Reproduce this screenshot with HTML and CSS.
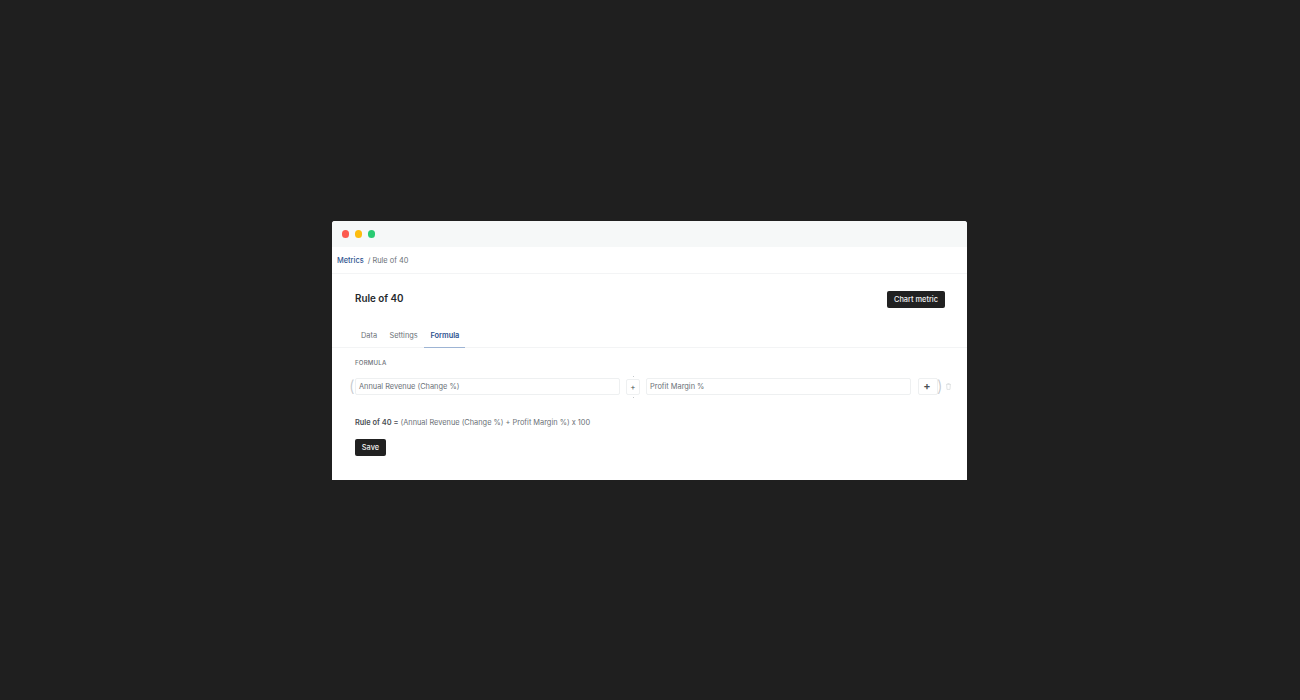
FILE: index.html
```html
<!DOCTYPE html>
<html lang="en">

<head>
    <meta charset="UTF-8">
    <title>Rule of 40</title>
    <link rel="stylesheet" href="styles.css">
</head>

<body>
    <div class="window">
        <div class="titlebar">
            <span class="dot dot-red"></span>
            <span class="dot dot-yellow"></span>
            <span class="dot dot-green"></span>
        </div>
        <div class="breadcrumb"><a>Metrics</a><span>/ Rule of 40</span></div>
        <div class="page-header">
            <h1>Rule of 40</h1>
            <button class="btn btn-chart">Chart metric</button>
        </div>
        <div class="tabs">
            <div class="tab">Data</div>
            <div class="tab">Settings</div>
            <div class="tab active">Formula</div>
        </div>
        <div class="content">
            <div class="section-label">FORMULA</div>
            <div class="formula-row">
                <span class="paren paren-left">(</span>
                <div class="field field-first">Annual Revenue (Change %)</div>
                <div class="operator">
                    <span class="op-tick"></span>
                    <div class="op-box">+</div>
                    <span class="op-tick"></span>
                </div>
                <div class="field field-second">Profit Margin %</div>
                <div class="add-box">+</div>
                <span class="paren paren-right">)</span>
                <svg class="trash" width="5" height="7" viewBox="0 0 6 8">
                    <path d="M0 1.5h6M2 1.5V.5h2v1M.8 1.5l.4 6h3.6l.4-6" fill="none" stroke="#dcdee0" stroke-width="1" />
                </svg>
            </div>
            <p class="result"><b>Rule of 40 =</b> (Annual Revenue (Change %) + Profit Margin %) x 100</p>
            <button class="btn btn-save">Save</button>
        </div>
    </div>
</body>

</html>
```

FILE: styles.css
```css
* {
    box-sizing: border-box;
}

body {
    margin: 0;
    height: 700px;
    background-color: #1f1f1f;
    display: flex;
    justify-content: flex-start;
    align-items: flex-start;
    padding: 221px 0 0 332px;
    font-family: Inter, "Liberation Sans", sans-serif;
    color: #6b7177;
}

.window {
    width: 635px;
    height: 259px;
    background-color: #fff;
    border-radius: 3px 3px 0 0;
    overflow: hidden;
}

.titlebar {
    height: 26px;
    background-color: #f6f8f8;
    display: flex;
    align-items: center;
    gap: 5.5px;
    padding-left: 9.5px;
}

.dot {
    width: 7.5px;
    height: 7.5px;
    border-radius: 50%;
}

.dot-red {
    background-color: #fc5a4f;
}

.dot-yellow {
    background-color: #fdbd0e;
}

.dot-green {
    background-color: #2acb73;
}

.breadcrumb {
    height: 27px;
    border-bottom: 1px solid #f3f4f5;
    display: flex;
    align-items: center;
    gap: 4px;
    padding: 1px 0 0 5px;
    font-size: 7.4px;
}

.breadcrumb a {
    color: #2f5490;
    font-weight: 500;
}

.page-header {
    display: flex;
    justify-content: space-between;
    align-items: center;
    padding: 17px 22px 0 23px;
}

.page-header h1 {
    margin: 0 0 2px;
    font-size: 9.8px;
    font-weight: 600;
    color: #24282c;
}

.btn {
    background-color: #212121;
    color: #f2f2f2;
    border: none;
    border-radius: 2px;
    height: 17px;
    padding: 0;
    font-family: inherit;
    font-size: 7.4px;
    font-weight: 500;
}

.btn-chart {
    width: 58px;
}

.btn-save {
    width: 31px;
}

.tabs {
    display: flex;
    margin-top: 16px;
    padding-left: 23px;
    height: 24px;
    border-bottom: 1px solid #f3f4f5;
    font-size: 7.4px;
}

.tab {
    padding: 0 6.3px 0 6px;
    height: 24px;
    line-height: 24px;
}

.tab.active {
    color: #2f5490;
    font-weight: 600;
    padding: 0 6px;
    margin-left: 0.4px;
    border-bottom: 1px solid #9db4d4;
}

.content {
    padding: 0 0 0 23px;
}

.section-label {
    margin-top: 11px;
    font-size: 6.1px;
    line-height: 8px;
    font-weight: 500;
    letter-spacing: 0.2px;
    color: #6b7177;
}

.formula-row {
    display: flex;
    align-items: center;
    margin-top: 11px;
    height: 17px;
    font-size: 7.4px;
}

.paren {
    color: #c4c8cc;
    font-size: 16px;
    font-weight: 300;
    line-height: 17px;
    width: 5px;
}

.paren-left {
    margin-left: -6px;
    width: 6px;
}

.field {
    height: 17px;
    line-height: 15px;
    width: 265px;
    padding-left: 3px;
    border: 1px solid #eef0f1;
    border-radius: 2px;
}

.operator {
    width: 26px;
    height: 22px;
    display: flex;
    flex-direction: column;
    align-items: center;
    justify-content: space-between;
}

.op-box {
    width: 14px;
    height: 16px;
    line-height: 15px;
    text-align: center;
    border: 1px solid #eef0f1;
    border-radius: 2px;
    font-size: 8px;
    color: #4a4f54;
}

.op-tick {
    width: 1px;
    height: 1px;
    background-color: #c4c8cc;
}

.add-box {
    width: 20px;
    height: 17px;
    margin-left: 7px;
    padding-right: 2px;
    line-height: 15px;
    text-align: center;
    border: 1px solid #eef0f1;
    border-radius: 2px;
    font-size: 11px;
    font-weight: 600;
    color: #4a4f54;
}

.paren-right {
    margin-left: -1px;
}

.trash {
    margin-left: 4px;
}

.result {
    margin: 23px 0 0;
    font-size: 7.4px;
    line-height: 10px;
}

.result b {
    font-weight: 600;
    color: #4a4f54;
}

.btn-save {
    display: block;
    margin-top: 11px;
}
```
